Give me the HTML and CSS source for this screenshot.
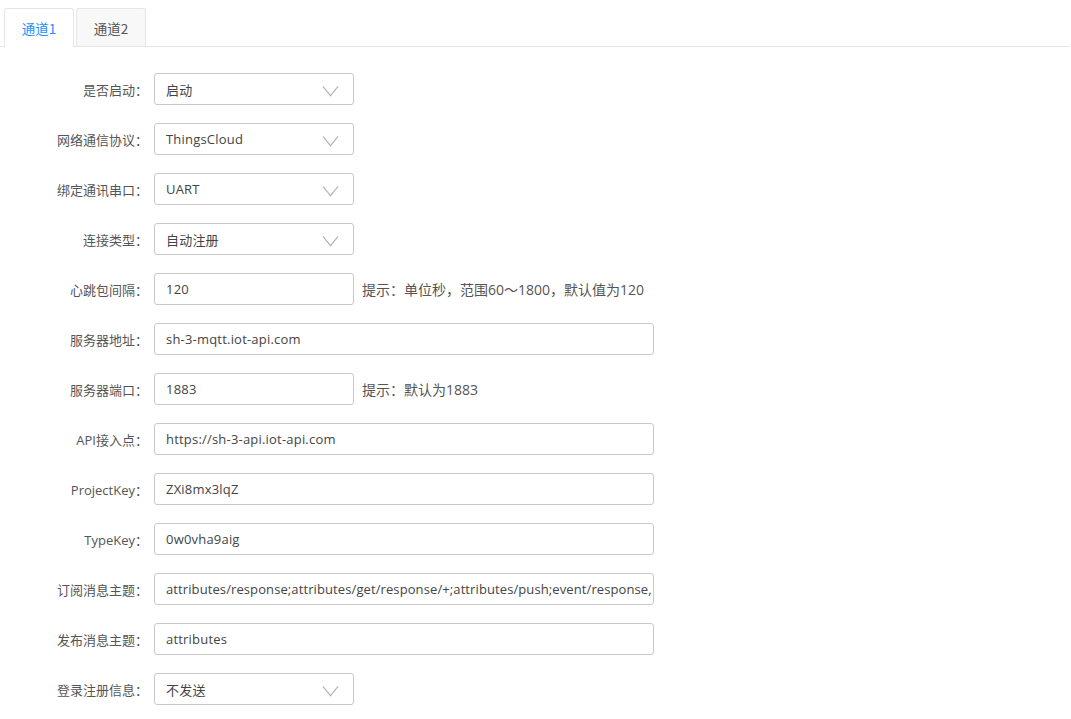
FILE: index.html
```html
<!DOCTYPE html>
<html lang="zh">
<head>
<meta charset="utf-8">
<link rel="stylesheet" href="styles.css">
</head>
<body>
<div class="tabs">
  <div class="tab active">通道1</div>
  <div class="tab">通道2</div>
</div>
<form class="form">
  <div class="row"><label class="label">是否启动：</label><div class="select"><span>启动</span><svg class="chev" viewBox="0 0 18 12"><path d="M1 1 L9 11 L17 1" /></svg></div></div>
  <div class="row"><label class="label">网络通信协议：</label><div class="select"><span>ThingsCloud</span><svg class="chev" viewBox="0 0 18 12"><path d="M1 1 L9 11 L17 1" /></svg></div></div>
  <div class="row"><label class="label">绑定通讯串口：</label><div class="select"><span>UART</span><svg class="chev" viewBox="0 0 18 12"><path d="M1 1 L9 11 L17 1" /></svg></div></div>
  <div class="row"><label class="label">连接类型：</label><div class="select"><span>自动注册</span><svg class="chev" viewBox="0 0 18 12"><path d="M1 1 L9 11 L17 1" /></svg></div></div>
  <div class="row"><label class="label">心跳包间隔：</label><div class="input short">120</div><span class="hint">提示：单位秒，范围60～1800，默认值为120</span></div>
  <div class="row"><label class="label">服务器地址：</label><div class="input wide">sh-3-mqtt.iot-api.com</div></div>
  <div class="row"><label class="label">服务器端口：</label><div class="input short">1883</div><span class="hint">提示：默认为1883</span></div>
  <div class="row"><label class="label">API接入点：</label><div class="input wide">https://sh-3-api.iot-api.com</div></div>
  <div class="row"><label class="label">ProjectKey：</label><div class="input wide">ZXi8mx3lqZ</div></div>
  <div class="row"><label class="label">TypeKey：</label><div class="input wide">0w0vha9aig</div></div>
  <div class="row"><label class="label">订阅消息主题：</label><div class="input wide clip"><span class="cliptext">attributes/response;attributes/get/response/+;attributes/push;event/response,</span></div></div>
  <div class="row"><label class="label">发布消息主题：</label><div class="input wide">attributes</div></div>
  <div class="row"><label class="label">登录注册信息：</label><div class="select"><span>不发送</span><svg class="chev" viewBox="0 0 18 12"><path d="M1 1 L9 11 L17 1" /></svg></div></div>
</form>
</body>
</html>
```
FILE: styles.css
```css
html, body {
  margin: 0;
  padding: 0;
  background: #fff;
}
body {
  font-family: "Open Sans", "Noto Sans CJK SC", sans-serif;
  font-size: 13px;
  color: #555;
}
.tabs {
  display: flex;
  gap: 2px;
  padding: 8px 0 0 4px;
  border-bottom: 1px solid #e6e6e6;
  height: 38px;
  margin-right: 1px;
}
.tab {
  width: 70px;
  height: 38px;
  box-sizing: border-box;
  border: 1px solid #e6e6e6;
  border-bottom: none;
  border-radius: 3px 3px 0 0;
  background: #f8f8f8;
  color: #555;
  font-family: "Noto Sans CJK SC", sans-serif;
  font-size: 13.5px;
  line-height: 38px;
  text-align: center;
}
.tab.active {
  background: #fff;
  color: #1e8fff;
  height: 39px;
  margin-bottom: -1px;
}
.form {
  display: flex;
  flex-direction: column;
  gap: 18px;
  padding-top: 26px;
}
.row {
  display: flex;
  align-items: center;
  height: 32px;
}
.label {
  width: 154px;
  flex: none;
  text-align: right;
  padding-right: 6px;
  box-sizing: border-box;
  font-family: "Open Sans", "Noto Sans CJK SC", sans-serif;
  color: #555;
  white-space: nowrap;
}
.select, .input {
  box-sizing: border-box;
  flex: none;
  height: 32px;
  border: 1px solid #c8c8c8;
  border-radius: 3px;
  padding: 0 11px;
  display: flex;
  align-items: center;
  color: #444;
  font-family: "Open Sans", "Noto Sans CJK SC", sans-serif;
  font-size: 13px;
  letter-spacing: 0.2px;
  white-space: nowrap;
}
.select {
  width: 200px;
  justify-content: space-between;
  padding-right: 14px;
}
.chev {
  width: 17px;
  height: 12px;
  margin-top: 4px;
}
.chev path {
  fill: none;
  stroke: #b5b5b5;
  stroke-width: 1.2;
}
.input.short {
  width: 200px;
}
.input.wide {
  width: 500px;
}
.input.clip {
  overflow: hidden;
  letter-spacing: 0.1px;
}
.cliptext {
  white-space: nowrap;
}
.hint {
  margin-left: 8px;
  color: #555;
  font-family: "Open Sans", "Noto Sans CJK SC", sans-serif;
  font-size: 14px;
  white-space: nowrap;
}
```
